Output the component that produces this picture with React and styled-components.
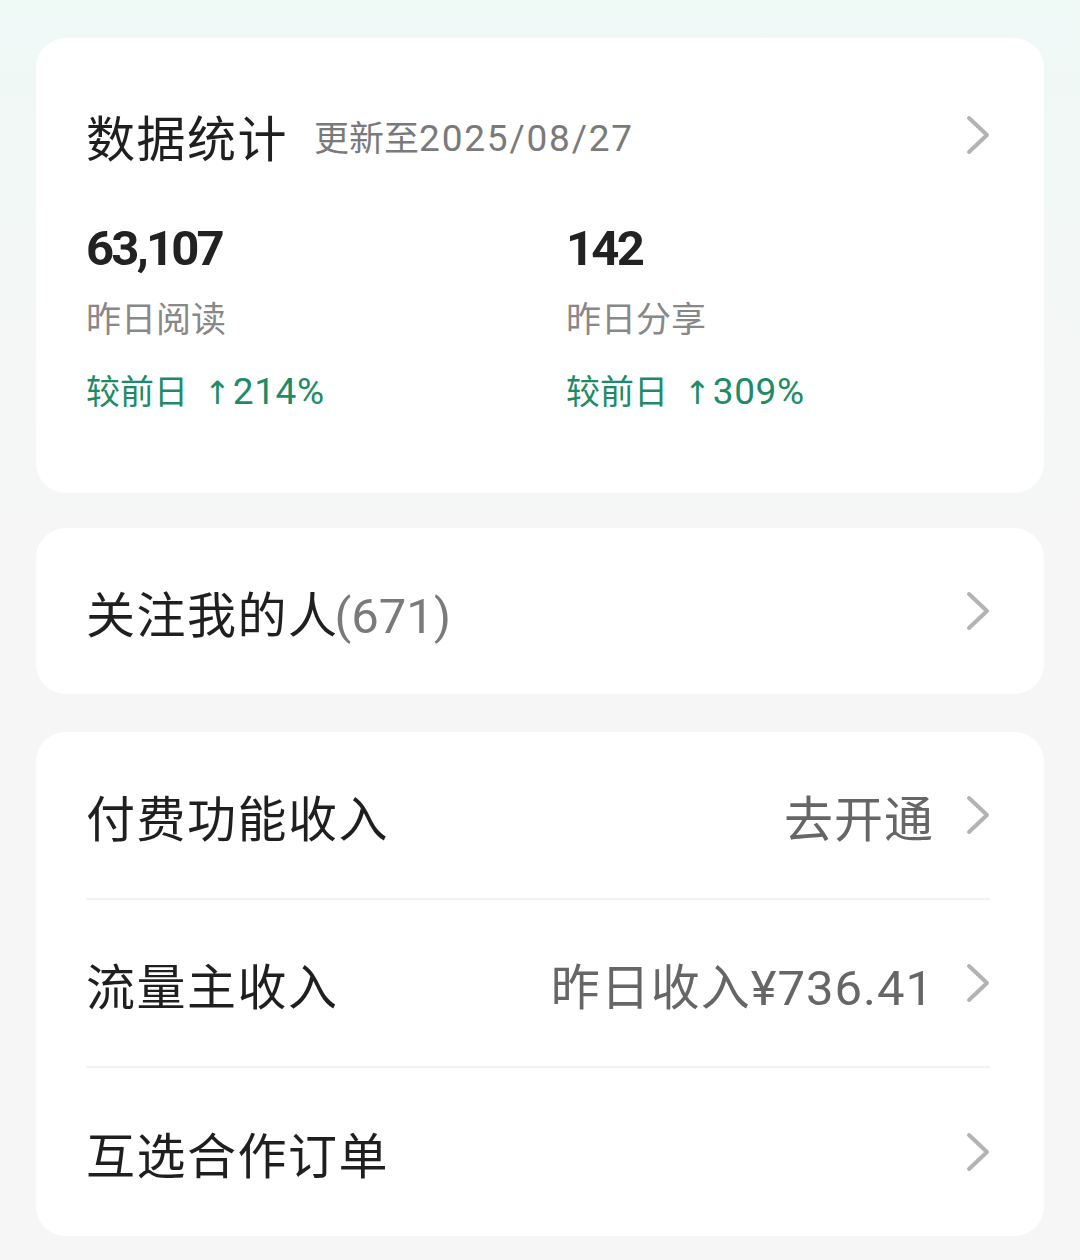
import React from "react";
import styled, { createGlobalStyle } from "styled-components";

const Global = createGlobalStyle`
  html, body { margin: 0; padding: 0; }
  body {
    background: linear-gradient(180deg, #eff9f6 0px, #f3f8f6 220px, #f6f6f6 520px, #f6f6f6 100%);
    font-family: Roboto, "Noto Sans CJK SC", sans-serif;
    -webkit-font-smoothing: antialiased;
  }
`;

const Page = styled.div`
  min-height: 1260px;
  padding: 38px 36px 0;
  box-sizing: border-box;
  display: flex;
  flex-direction: column;
`;

const Card = styled.section`
  background: #ffffff;
  border-radius: 30px;
  margin-bottom: ${(p) => p.$gap || 0}px;
`;

const StatsCard = styled(Card)`
  padding: 62px 54px 75px 50px;
`;

const Header = styled.div`
  display: flex;
  align-items: center;
  height: 70px;
`;

const Title = styled.h2`
  margin: 0;
  font-size: 49px;
  font-weight: 400;
  color: #1f1f1f;
  letter-spacing: 1.5px;
`;

const Sub = styled.span`
  margin-left: 26px;
  font-size: 35px;
  color: #7a7a7a;
  flex: 1;
`;

const SubNum = styled.span`
  font-size: 37px;
  letter-spacing: 1.8px;
`;

const Grid = styled.div`
  display: grid;
  grid-template-columns: 480px 1fr;
  margin-top: 49px;
`;

const Stat = styled.div`
  display: flex;
  flex-direction: column;
`;

const Value = styled.div`
  font-size: 49px;
  font-weight: 700;
  color: #222;
  line-height: 60px;
  letter-spacing: -2.8px;
`;

const Label = styled.div`
  margin-top: 17px;
  font-size: 35px;
  line-height: 50px;
  color: #888;
`;

const Delta = styled.div`
  margin-top: 21px;
  font-size: 34px;
  line-height: 50px;
  color: #1d8c66;
`;

const Arrow = styled.span`
  font-family: "DejaVu Sans", sans-serif;
  margin-left: 16px;
  margin-right: 2px;
  font-size: 32px;
`;

const DeltaNum = styled.span`
  font-size: 37px;
  letter-spacing: 0.6px;
`;

const Row = styled.div`
  display: flex;
  align-items: center;
  height: ${(p) => p.$h || 168}px;
  margin: 0 54px 0 50px;
  box-sizing: border-box;
  border-bottom: ${(p) => (p.$line ? "2px solid #f2f2f2" : "none")};
`;

const RowTitle = styled.div`
  flex: 1;
  font-size: 49px;
  color: #1f1f1f;
  letter-spacing: 1.5px;
`;

const Count = styled.span`
  color: #7a7a7a;
  letter-spacing: 0;
  margin-left: -4px;
`;

const RowValue = styled.div`
  font-size: 49px;
  color: #666;
  margin-right: 32px;
  letter-spacing: 1px;
`;

const Chevron = () => (
  <svg width="24" height="40" viewBox="0 0 24 40" fill="none">
    <polyline
      points="3,3 21,20 3,37"
      stroke="#b3b3b3"
      strokeWidth="4"
      strokeLinecap="round"
      strokeLinejoin="round"
    />
  </svg>
);

export default function App() {
  return (
    <>
      <Global />
      <Page>
        <StatsCard $gap={35}>
          <Header>
            <Title>数据统计</Title>
            <Sub>
              更新至<SubNum>2025/08/27</SubNum>
            </Sub>
            <Chevron />
          </Header>
          <Grid>
            <Stat>
              <Value>63,107</Value>
              <Label>昨日阅读</Label>
              <Delta>
                较前日<Arrow>↑</Arrow>
                <DeltaNum>214%</DeltaNum>
              </Delta>
            </Stat>
            <Stat>
              <Value>142</Value>
              <Label>昨日分享</Label>
              <Delta>
                较前日<Arrow>↑</Arrow>
                <DeltaNum>309%</DeltaNum>
              </Delta>
            </Stat>
          </Grid>
        </StatsCard>

        <Card $gap={38}>
          <Row $h={166}>
            <RowTitle>
              关注我的人<Count>(671)</Count>
            </RowTitle>
            <Chevron />
          </Row>
        </Card>

        <Card>
          <Row $line>
            <RowTitle>付费功能收入</RowTitle>
            <RowValue>去开通</RowValue>
            <Chevron />
          </Row>
          <Row $line>
            <RowTitle>流量主收入</RowTitle>
            <RowValue>昨日收入¥736.41</RowValue>
            <Chevron />
          </Row>
          <Row>
            <RowTitle>互选合作订单</RowTitle>
            <Chevron />
          </Row>
        </Card>
      </Page>
    </>
  );
}
